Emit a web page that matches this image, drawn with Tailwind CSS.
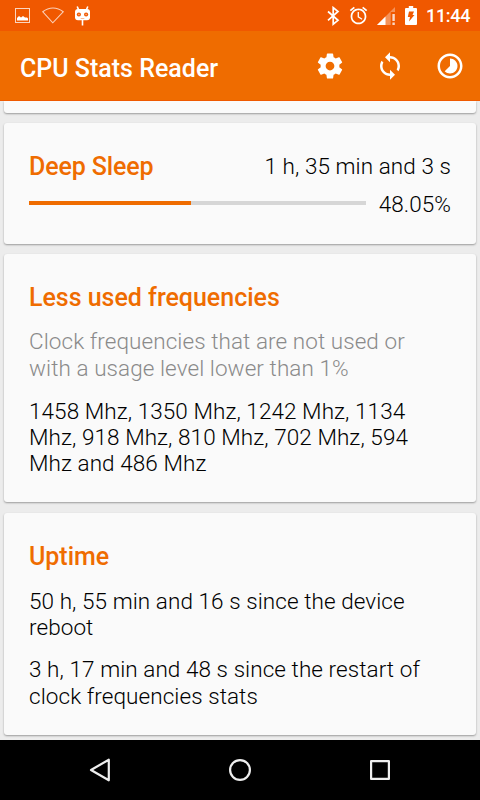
<!DOCTYPE html>
<html lang="en">
<head>
  <meta charset="UTF-8" />
  <title>CPU Stats Reader</title>
  <script src="https://cdn.jsdelivr.net/npm/@tailwindcss/browser@4"></script>
</head>
<body class="w-[480px] h-[800px] overflow-hidden flex flex-col bg-[#ececec] text-[#212121] font-['Roboto',sans-serif]">
  <!-- status bar -->
  <div class="h-[31px] shrink-0 bg-[#f05800] flex items-center text-white">
    <svg class="w-[15px] h-[15px] ml-[15px]" viewBox="0 0 15 15">
      <rect x=".5" y=".5" width="14" height="14" fill="none" stroke="#fbd5c0" />
      <path d="M2 12.500V10L4 8L6 9.500L8 8L10 9.500L12 9.500L13 10.500V12.500Z" fill="#fff" />
    </svg>
    <svg class="w-[22px] h-[17px] ml-3" viewBox="0 0 22 17">
      <path d="M.8 4.800Q5.500 1 11 1T21.200 4.800L10.800 15.800Z" fill="none" stroke="#fbd0b8" stroke-width="1.100" />
    </svg>
    <svg class="w-[18px] h-[20px] ml-[10px]" viewBox="0 0 18 20">
      <path d="M3.200 .5L4.700 4M13.800 .5L12.300 4M8.500 13.500V19.500" stroke="#fff" stroke-width="1.600" fill="none" />
      <rect x="1" y="3" width="15" height="11.300" rx="3" fill="#fff" />
      <circle cx="4.900" cy="8.500" r="2.100" fill="#ef5a05" />
      <circle cx="12.100" cy="8.500" r="2.100" fill="#ef5a05" />
      <circle cx="4.900" cy="8.500" r=".8" fill="#fbb48a" />
      <circle cx="12.100" cy="8.500" r=".8" fill="#fbb48a" />
      <path d="M6.700 12.500H10.300" stroke="#f8a77c" stroke-width=".8" />
    </svg>
    <svg class="w-[14px] h-[20px] ml-auto" viewBox="0 0 14 20">
      <path d="M2 5.500L12 14.300L7.200 18.200V1.600L12 5.500L2 14.300" fill="none" stroke="#fff" stroke-width="1.700" />
    </svg>
    <svg class="w-[21px] h-[21px] ml-[8px]" viewBox="0 0 24 24" fill="#fff">
      <path d="M22 5.720l-4.600-3.860-1.290 1.530 4.600 3.860L22 5.720zM7.880 3.390L6.600 1.860 2 5.710l1.290 1.530 4.590-3.850zM12.500 8H11v6l4.750 2.850.75-1.230-4-2.370V8zM12 4c-4.970 0-9 4.030-9 9s4.020 9 9 9c4.970 0 9-4.030 9-9s-4.030-9-9-9zm0 16c-3.870 0-7-3.130-7-7s3.130-7 7-7 7 3.130 7 7-3.130 7-7 7z" />
    </svg>
    <svg class="w-[18px] h-[18px] ml-[8px]" viewBox="0 0 18 18">
      <path d="M0 18L18 0V5H13.700V18Z" fill="#fff" fill-opacity=".35" />
      <path d="M0 18L8.500 9.500V18Z" fill="#fff" />
      <path d="M15.400 7H17.800V14H15.400ZM15.400 15.500H17.800V18H15.400Z" fill="#fbd9c8" />
    </svg>
    <svg class="w-[12px] h-[19px] ml-[10px]" viewBox="0 0 12 19">
      <path d="M3.800 0H8.200V2H11Q12 2 12 3V18Q12 19 11 19H1Q0 19 0 18V3Q0 2 1 2H3.800Z" fill="#fff" />
      <path d="M4 5.500H9L7.500 9H9.500L4 15.500L5 11H2.800Z" fill="#f05800" />
    </svg>
    <span class="ml-[9px] mr-[10px] mt-px w-[44px] text-[18px] leading-[20px] tracking-[-0.3px] font-medium whitespace-nowrap">11:44</span>
  </div>

  <!-- toolbar -->
  <div class="h-[70px] shrink-0 bg-[#ef6c00] border-b border-[#ef5a00] flex items-center text-white">
    <h1 class="ml-5 mt-[6px] text-[25px] leading-[30px] font-medium whitespace-nowrap">CPU Stats Reader</h1>
    <svg class="w-[30px] h-[30px] ml-auto" viewBox="0 0 24 24" fill="#fff">
      <path d="M19.430 12.980c.04-.32.070-.64.070-.98s-.03-.66-.07-.98l2.110-1.650c.19-.15.240-.42.120-.64l-2-3.460c-.12-.22-.39-.3-.61-.22l-2.490 1c-.52-.4-1.080-.73-1.690-.98l-.38-2.650C14.460 2.180 14.250 2 14 2h-4c-.25 0-.46.180-.49.420l-.38 2.650c-.61.250-1.170.59-1.690.98l-2.490-1c-.23-.09-.49 0-.61.220l-2 3.460c-.13.220-.07.490.120.640l2.110 1.650c-.04.320-.07.650-.07.980s.03.660.070.980l-2.110 1.650c-.19.150-.24.420-.12.640l2 3.460c.12.220.39.300.61.220l2.490-1c.52.400 1.080.73 1.690.98l.38 2.650c.03.240.24.420.49.420h4c.25 0 .46-.18.490-.42l.38-2.650c.61-.25 1.170-.59 1.690-.98l2.490 1c.23.090.49 0 .61-.22l2-3.460c.12-.22.070-.49-.12-.64l-2.110-1.650zM12 15.500c-1.930 0-3.500-1.570-3.500-3.500s1.570-3.500 3.500-3.500 3.500 1.570 3.500 3.500-1.570 3.500-3.500 3.500z" />
    </svg>
    <svg class="w-[30px] h-[30px] ml-[30px]" viewBox="0 0 24 24" fill="#fff">
      <path d="M12 4V1L8 5l4 4V6c3.310 0 6 2.690 6 6 0 1.010-.25 1.970-.7 2.800l1.460 1.460C19.540 15.030 20 13.570 20 12c0-4.420-3.580-8-8-8zm0 14c-3.310 0-6-2.690-6-6 0-1.010.25-1.970.7-2.800L5.240 7.740C4.460 8.970 4 10.430 4 12c0 4.420 3.580 8 8 8v3l4-4-4-4v3z" />
    </svg>
    <svg class="w-[30px] h-[30px] ml-[30px] mr-[15px]" viewBox="0 0 24 24" fill="#fff">
      <path d="M16.240 7.760C15.070 6.590 13.540 6 12 6v6l-4.240 4.240c2.340 2.340 6.140 2.340 8.490 0 2.340-2.340 2.340-6.140-.01-8.480zM12 2C6.480 2 2 6.480 2 12s4.480 10 10 10 10-4.480 10-10S17.520 2 12 2zm0 18c-4.420 0-8-3.580-8-8s3.580-8 8-8 8 3.580 8 8-3.580 8-8 8z" />
    </svg>
  </div>

  <!-- cards -->
  <main class="h-[639px] shrink-0 overflow-hidden px-1 text-[22.5px] leading-[26px] tracking-[0.07px] font-light text-black whitespace-nowrap">
    <div class="h-3 rounded-b-[3px] bg-[#fafafa] shadow-[0_1px_2px_rgba(0,0,0,0.35)]"></div>

    <section class="mt-[10px] h-[121px] px-[25px] pt-[30px] rounded-[3px] bg-[#fafafa] shadow-[0_1px_2px_rgba(0,0,0,0.35)]">
      <div class="flex justify-between">
        <h2 class="pt-px text-[25px] leading-[26px] tracking-[-0.12px] font-medium text-[#ef6c00]">Deep Sleep</h2>
        <span>1 h, 35 min and 3 s</span>
      </div>
      <div class="mt-[11px] flex items-center justify-between">
        <div class="w-[337px] h-1 -mt-[3px] bg-[#d6d6d6]">
          <div class="h-1 bg-[#ef6c00]" style="width: 48.05%"></div>
        </div>
        <span>48.05%</span>
      </div>
    </section>

    <section class="mt-[10px] h-[248px] px-[25px] pt-[31px] rounded-[3px] bg-[#fafafa] shadow-[0_1px_2px_rgba(0,0,0,0.35)]">
      <h2 class="text-[25px] leading-[26px] tracking-[-0.02px] font-medium text-[#ef6c00]">Less used frequencies</h2>
      <p class="mt-[17px] leading-[27px] text-[#8a8a8a]">Clock frequencies that are not used or<br>with a usage level lower than 1%</p>
      <p class="mt-[16px]">1458 Mhz, 1350 Mhz, 1242 Mhz, 1134<br>Mhz, 918 Mhz, 810 Mhz, 702 Mhz, 594<br>Mhz and 486 Mhz</p>
    </section>

    <section class="mt-[11px] h-[222px] px-[25px] pt-[31px] rounded-[3px] bg-[#fafafa] shadow-[0_1px_2px_rgba(0,0,0,0.35)]">
      <h2 class="text-[25px] leading-[26px] tracking-[-0.02px] font-medium text-[#ef6c00]">Uptime</h2>
      <p class="mt-[18px] leading-[26px]">50 h, 55 min and 16 s since the device<br>reboot</p>
      <p class="mt-[16px] leading-[27px]">3 h, 17 min and 48 s since the restart of<br>clock frequencies stats</p>
    </section>
  </main>

  <!-- navigation bar -->
  <nav class="h-[60px] shrink-0 bg-black flex items-center justify-center gap-[116px]">
    <svg class="w-6 h-6" viewBox="0 0 24 24" fill="none" stroke="#eee" stroke-width="2.200" stroke-linejoin="round">
      <path d="M3 12L20.800 1.700V22.300Z" />
    </svg>
    <svg class="w-6 h-6" viewBox="0 0 24 24" fill="none" stroke="#eee" stroke-width="2.200">
      <circle cx="12" cy="12" r="9.900" />
    </svg>
    <svg class="w-6 h-6" viewBox="0 0 24 24" fill="none" stroke="#eee" stroke-width="2.200" stroke-linejoin="round">
      <rect x="3.100" y="3.100" width="17.800" height="17.800" />
    </svg>
  </nav>
</body>
</html>
